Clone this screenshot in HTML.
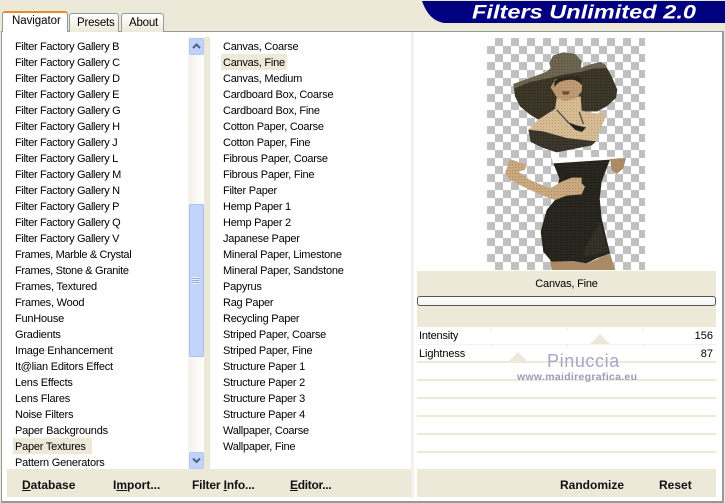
<!DOCTYPE html>
<html><head><meta charset="utf-8"><style>
html,body{margin:0;padding:0}
body{width:725px;height:503px;overflow:hidden;background:#ece9d8;position:relative;font-family:"Liberation Sans",sans-serif;font-size:11px;color:#000}
.a{position:absolute}
.t{position:absolute;white-space:nowrap;line-height:16px;height:16px}
.f{letter-spacing:-.35px}
.b{position:absolute;white-space:nowrap;font-weight:bold;font-size:12px;line-height:16px;top:477px;color:#111}
.sep{position:absolute;left:417px;width:299px;height:2px;background:#ece9d8}
u{text-underline-offset:1px}
</style></head><body>
<div class="a" style="left:1px;top:31px;width:720px;height:469px;background:#fff;border:1px solid #919b9c;border-right:2px solid #919b9c;border-bottom:2px solid #919b9c"></div>
<div class="a" style="left:69px;top:13px;width:48px;height:18px;background:linear-gradient(#fff,#ece9d8);border:1px solid #919b9c;border-bottom:0;border-radius:3px 3px 0 0"></div>
<div class="a" style="left:121px;top:13px;width:41px;height:18px;background:linear-gradient(#fff,#ece9d8);border:1px solid #919b9c;border-bottom:0;border-radius:3px 3px 0 0"></div>
<div class="a" style="left:2px;top:11px;width:66px;height:21px;background:#fff;border-left:1px solid #919b9c;border-right:1px solid #919b9c;border-radius:3px 3px 0 0;box-sizing:border-box;border-top:2px solid #e68b2c"></div>
<div class="t" style="left:12px;top:13px;font-size:11.5px;letter-spacing:-.05px">Navigator</div>
<div class="t" style="left:77px;top:15px;font-size:11.5px;letter-spacing:-.2px">Presets</div>
<div class="t" style="left:129px;top:15px;font-size:11.5px;letter-spacing:-.2px">About</div>

<svg class="a" style="left:420px;top:0" width="305" height="24"><path d="M2 1H305V23H24C12 21 6 12 2 1Z" fill="#000080"/><text x="52" y="18.5" font-family="Liberation Sans" font-weight="bold" font-style="italic" font-size="19.5" fill="#fff" textLength="224" lengthAdjust="spacingAndGlyphs">Filters Unlimited 2.0</text></svg>

<!-- gutters -->
<div class="a" style="left:204px;top:37px;width:6px;height:432px;background:#ece9d8"></div>
<div class="a" style="left:411px;top:32px;width:3px;height:467px;background:#f3f1e9"></div>
<div class="a" style="left:7px;top:469px;width:404px;height:28px;background:#ece9d8"></div>
<div class="a" style="left:417px;top:469px;width:299px;height:28px;background:#ece9d8"></div>

<!-- scrollbar -->
<div class="a" style="left:188px;top:37px;width:16px;height:432px;background:linear-gradient(90deg,#f3f1ec,#fefefb)"></div>
<div class="a" style="left:189px;top:38px;width:13px;height:15px;background:#c1d3fb;border:1px solid #b5c9f5;border-radius:2px"></div>
<svg class="a" style="left:189px;top:38px" width="15" height="16"><path d="M4 10L7.5 6.5L11 10" fill="none" stroke="#4d6185" stroke-width="2"/></svg>
<div class="a" style="left:189px;top:452px;width:13px;height:15px;background:#c1d3fb;border:1px solid #b5c9f5;border-radius:2px"></div>
<svg class="a" style="left:189px;top:452px" width="15" height="16"><path d="M4 6.5L7.5 10L11 6.5" fill="none" stroke="#4d6185" stroke-width="2"/></svg>
<div class="a" style="left:189px;top:204px;width:13px;height:151px;background:#c2d3fc;border:1px solid #a9c0f0;border-radius:2px"></div>
<div class="a" style="left:192px;top:277px;width:7px;height:7px;background:repeating-linear-gradient(#eef3fe 0 1px,#8fa8dc 1px 2px)"></div>

<!-- highlights -->
<div class="a" style="left:13px;top:438px;width:79px;height:16px;background:#ece9d8"></div>
<div class="a" style="left:221px;top:54px;width:66px;height:16px;background:#ece9d8"></div>

<div class="a" id="l1" style="left:15px;top:39px;letter-spacing:-.22px">
<div class="t f" style="top:0">Filter Factory Gallery B</div>
<div class="t f" style="top:16px">Filter Factory Gallery C</div>
<div class="t f" style="top:32px">Filter Factory Gallery D</div>
<div class="t f" style="top:48px">Filter Factory Gallery E</div>
<div class="t f" style="top:64px">Filter Factory Gallery G</div>
<div class="t f" style="top:80px">Filter Factory Gallery H</div>
<div class="t f" style="top:96px">Filter Factory Gallery J</div>
<div class="t f" style="top:112px">Filter Factory Gallery L</div>
<div class="t f" style="top:128px">Filter Factory Gallery M</div>
<div class="t f" style="top:144px">Filter Factory Gallery N</div>
<div class="t f" style="top:160px">Filter Factory Gallery P</div>
<div class="t f" style="top:176px">Filter Factory Gallery Q</div>
<div class="t f" style="top:192px">Filter Factory Gallery V</div>
<div class="t f" style="top:208px">Frames, Marble &amp; Crystal</div>
<div class="t f" style="top:224px">Frames, Stone &amp; Granite</div>
<div class="t" style="top:240px">Frames, Textured</div>
<div class="t" style="top:256px">Frames, Wood</div>
<div class="t" style="top:272px">FunHouse</div>
<div class="t" style="top:288px">Gradients</div>
<div class="t" style="top:304px">Image Enhancement</div>
<div class="t" style="top:320px">It@lian Editors Effect</div>
<div class="t" style="top:336px">Lens Effects</div>
<div class="t" style="top:352px">Lens Flares</div>
<div class="t" style="top:368px">Noise Filters</div>
<div class="t" style="top:384px">Paper Backgrounds</div>
<div class="t" style="top:400px">Paper Textures</div>
<div class="t" style="top:416px">Pattern Generators</div>
</div>

<div class="a" id="l2" style="left:223px;top:39px;letter-spacing:-.25px">
<div class="t" style="top:0">Canvas, Coarse</div>
<div class="t" style="top:16px">Canvas, Fine</div>
<div class="t" style="top:32px">Canvas, Medium</div>
<div class="t" style="top:48px">Cardboard Box, Coarse</div>
<div class="t" style="top:64px">Cardboard Box, Fine</div>
<div class="t" style="top:80px">Cotton Paper, Coarse</div>
<div class="t" style="top:96px">Cotton Paper, Fine</div>
<div class="t" style="top:112px">Fibrous Paper, Coarse</div>
<div class="t" style="top:128px">Fibrous Paper, Fine</div>
<div class="t" style="top:144px">Filter Paper</div>
<div class="t" style="top:160px">Hemp Paper 1</div>
<div class="t" style="top:176px">Hemp Paper 2</div>
<div class="t" style="top:192px">Japanese Paper</div>
<div class="t" style="top:208px">Mineral Paper, Limestone</div>
<div class="t" style="top:224px">Mineral Paper, Sandstone</div>
<div class="t" style="top:240px">Papyrus</div>
<div class="t" style="top:256px">Rag Paper</div>
<div class="t" style="top:272px">Recycling Paper</div>
<div class="t" style="top:288px">Striped Paper, Coarse</div>
<div class="t" style="top:304px">Striped Paper, Fine</div>
<div class="t" style="top:320px">Structure Paper 1</div>
<div class="t" style="top:336px">Structure Paper 2</div>
<div class="t" style="top:352px">Structure Paper 3</div>
<div class="t" style="top:368px">Structure Paper 4</div>
<div class="t" style="top:384px">Wallpaper, Coarse</div>
<div class="t" style="top:400px">Wallpaper, Fine</div>
</div>

<!-- preview -->
<svg class="a" style="left:487px;top:38px" width="158" height="232">
<defs>
<pattern id="ch" width="16" height="16" patternUnits="userSpaceOnUse"><rect width="16" height="16" fill="#fff"/><rect x="8" width="8" height="8" fill="#c0c0c0"/><rect y="8" width="8" height="8" fill="#c0c0c0"/></pattern>
</defs>
<rect width="158" height="232" fill="url(#ch)"/>
</svg>
<svg class="a" style="left:510px;top:48px" width="115" height="115" viewBox="0 0 345 345">
<defs><pattern id="tx" width="9" height="9" patternUnits="userSpaceOnUse"><circle cx="2" cy="2" r="1.6" fill="#000" opacity=".2"/><circle cx="6.5" cy="6.5" r="1.6" fill="#fff" opacity=".1"/></pattern></defs>
<!-- white strip under bodice -->
<path d="M205 345L345 330V345Z" fill="#fff"/>
<!-- hat dark -->
<path d="M10 108L60 90L110 72L122 60L118 45L130 22L160 13L195 18L215 40L212 60L240 50L270 42L285 50L305 85L322 125L318 150L290 175L262 190L215 190L140 180L85 215L60 200L30 175L15 145Z" fill="#3a3425"/>
<!-- hat light -->
<path d="M10 108L60 90L110 72L122 60L118 45L130 22L160 13L195 18L215 40L212 60L240 50L270 42L285 50L290 60L250 62L210 72L160 80L120 90L60 102L12 122Z" fill="#6b634d"/>
<!-- neck and chest -->
<path d="M140 150L135 185L85 215L55 245L100 250L170 270L240 282L258 278L290 198L250 195L215 188L212 145Z" fill="#d7bb92"/>
<!-- face -->
<path d="M122 118L135 95L175 85L218 90L215 130L200 150L165 160L140 148Z" fill="#bf9a70"/>
<path d="M133 100C150 84 195 80 218 90L216 112C205 98 190 92 172 96C158 98 145 100 133 118Z" fill="#2d2719"/>
<path d="M155 130L180 130L175 140L160 140Z" fill="#6b4a38"/>
<!-- necklace -->
<path d="M140 185L176 225M208 192L220 228" stroke="#4d5148" stroke-width="4" fill="none"/>
<path d="M172 222L200 232L228 238L216 252L196 246Z" fill="#23211b"/>
<!-- bodice -->
<path d="M55 245L100 250L170 270L258 280L245 292L140 313L100 300L62 282Z" fill="#39342a"/>
<path d="M10 108L60 90L110 72L122 60L118 45L130 22L160 13L195 18L215 40L212 60L270 42L285 50L322 125L318 150L262 190L290 198L258 280L245 292L140 313L100 300L62 282L55 245L85 215L30 175L15 145Z" fill="url(#tx)"/>
</svg>
<svg class="a" style="left:500px;top:155px" width="140" height="115" viewBox="0 0 420 345">
<defs><pattern id="tx2" width="9" height="9" patternUnits="userSpaceOnUse"><circle cx="2" cy="2" r="1.6" fill="#000" opacity=".2"/><circle cx="6.5" cy="6.5" r="1.6" fill="#fff" opacity=".1"/></pattern></defs>
<path d="M155 8L378 5L330 15L160 27Z" fill="#fff"/>
<!-- legs -->
<path d="M150 315L225 318L262 325L330 295L345 345H155Z" fill="#a98a64"/>
<!-- dress -->
<path d="M160 25L330 14L305 80L299 130L305 190L330 295L290 310L260 325L220 318L155 320L130 290L122 230L140 165L165 135L178 70Z" fill="#25241c"/>
<path d="M300 200L325 290L255 305L250 290Z" fill="#312f25"/>
<!-- right arm -->
<path d="M330 12L378 9L370 40L350 57L335 45Z" fill="#a98a62"/>
<!-- left arm -->
<path d="M30 12L80 30L75 45L55 50L90 75L150 100L185 80L215 68L245 68L245 85L255 95L245 118L200 122L165 135L135 125L80 100L30 75L15 55Z" fill="#c9a87e"/>
<path d="M160 25L330 14L299 130L330 295L260 325L155 320L122 230L165 135L30 75L15 55L30 12L80 30L55 50L150 100L215 68L245 68" fill="url(#tx2)"/>
</svg>

<div class="a" style="left:417px;top:271px;width:299px;height:56px;background:#ece9d8"></div>
<div class="t" style="left:417px;width:299px;top:276px;text-align:center;letter-spacing:-.2px">Canvas, Fine</div>
<div class="a" style="left:417px;top:296px;width:297px;height:8px;background:linear-gradient(#fff,#f4f4f4);border:1px solid #555;border-radius:3px"></div>

<!-- sliders -->
<div class="sep" style="top:344px;height:1px;background:#f5f3ea"></div>
<div class="sep" style="top:361px"></div>
<div class="sep" style="top:379px"></div>
<div class="sep" style="top:397px"></div>
<div class="sep" style="top:415px"></div>
<div class="sep" style="top:433px"></div>
<div class="sep" style="top:451px"></div>
<svg class="a" style="left:417px;top:327px" width="299" height="40">
<path d="M173 17L183 7L193 17Z" fill="#ece9d8"/>
<path d="M91 35L101 25L111 35Z" fill="#ece9d8"/>
<path d="M74 1V4M150 1V4M226 1V4M74 17V20M150 17V20M226 17V20" stroke="#ece9d8"/>
</svg>
<div class="t" style="left:419px;top:328px;letter-spacing:-.2px">Intensity</div>
<div class="t" style="right:12px;top:328px">156</div>
<div class="t" style="left:419px;top:346px;letter-spacing:-.1px">Lightness</div>
<div class="t" style="right:12px;top:346px">87</div>

<!-- watermark -->
<div class="t" style="left:547px;top:351px;font-size:18px;line-height:20px;height:20px;color:#a4a6c8;letter-spacing:.6px">Pinuccia</div>
<div class="t" style="left:517px;top:369px;font-size:10.5px;font-weight:bold;color:#9b9db4;letter-spacing:.3px">www.maidiregrafica.eu</div>

<!-- buttons -->
<div class="b" style="left:22px"><u>D</u>atabase</div>
<div class="b" style="left:113px">I<u>m</u>port...</div>
<div class="b" style="left:192px;letter-spacing:-.15px">Filter <u>I</u>nfo...</div>
<div class="b" style="left:290px;letter-spacing:-.3px"><u>E</u>ditor...</div>
<div class="b" style="left:560px">Randomize</div>
<div class="b" style="left:659px">Reset</div>
</body></html>
